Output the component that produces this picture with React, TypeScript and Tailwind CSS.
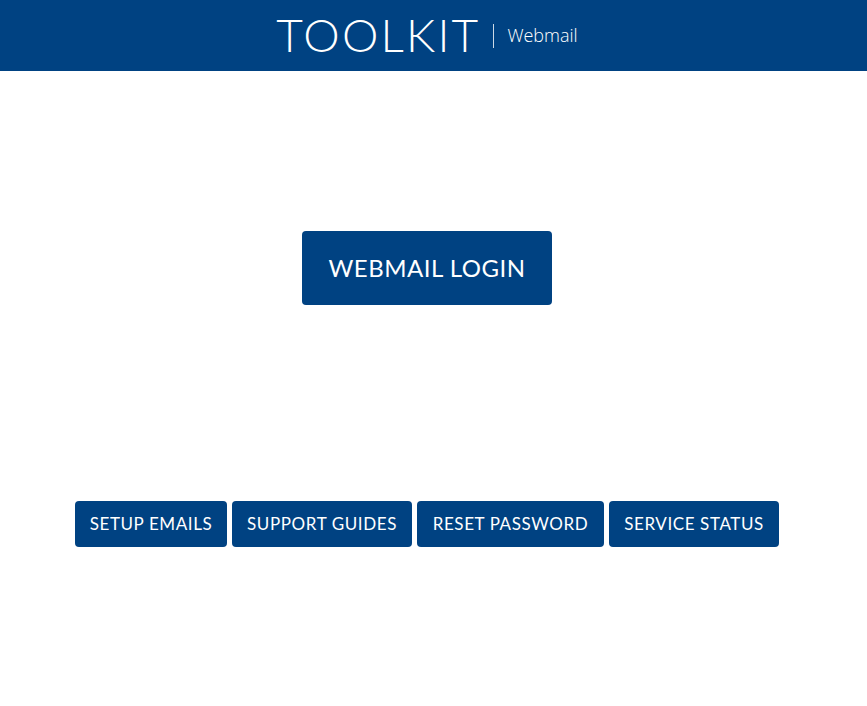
import React from 'react'

const links = [
  { label: 'SETUP EMAILS', w: 'w-[152px]' },
  { label: 'SUPPORT GUIDES', w: 'w-[180px]' },
  { label: 'RESET PASSWORD', w: 'w-[187px]' },
  { label: 'SERVICE STATUS', w: 'w-[170px]' },
]

export default function App() {
  return (
    <div className="min-h-[706px] bg-white font-['Lato',sans-serif]">
      <header className="h-[71px] bg-[#004282] pr-[13px] flex items-center justify-center">
        <span className="text-white text-[46px] leading-none tracking-[2.2px] font-light -mt-[1px]">TOOLKIT</span>
        <span className="w-px h-[24px] bg-white/80 ml-[13px] mr-[13px]" />
        <span className="text-white text-[18px] font-light font-['Open_Sans',sans-serif]">Webmail</span>
      </header>

      <main className="pr-[13px] flex flex-col items-center">
        <button className="mt-[160px] w-[250px] h-[74px] rounded-[4px] bg-[#004282] text-white text-[24px] tracking-[0.5px]">
          WEBMAIL LOGIN
        </button>

        <nav className="mt-[196px] flex gap-[5px]">
          {links.map((l) => (
            <button
              key={l.label}
              className={`${l.w} h-[46px] rounded-[4px] bg-[#004282] text-white text-[17px] tracking-[0.6px]`}
            >
              {l.label}
            </button>
          ))}
        </nav>
      </main>
    </div>
  )
}
